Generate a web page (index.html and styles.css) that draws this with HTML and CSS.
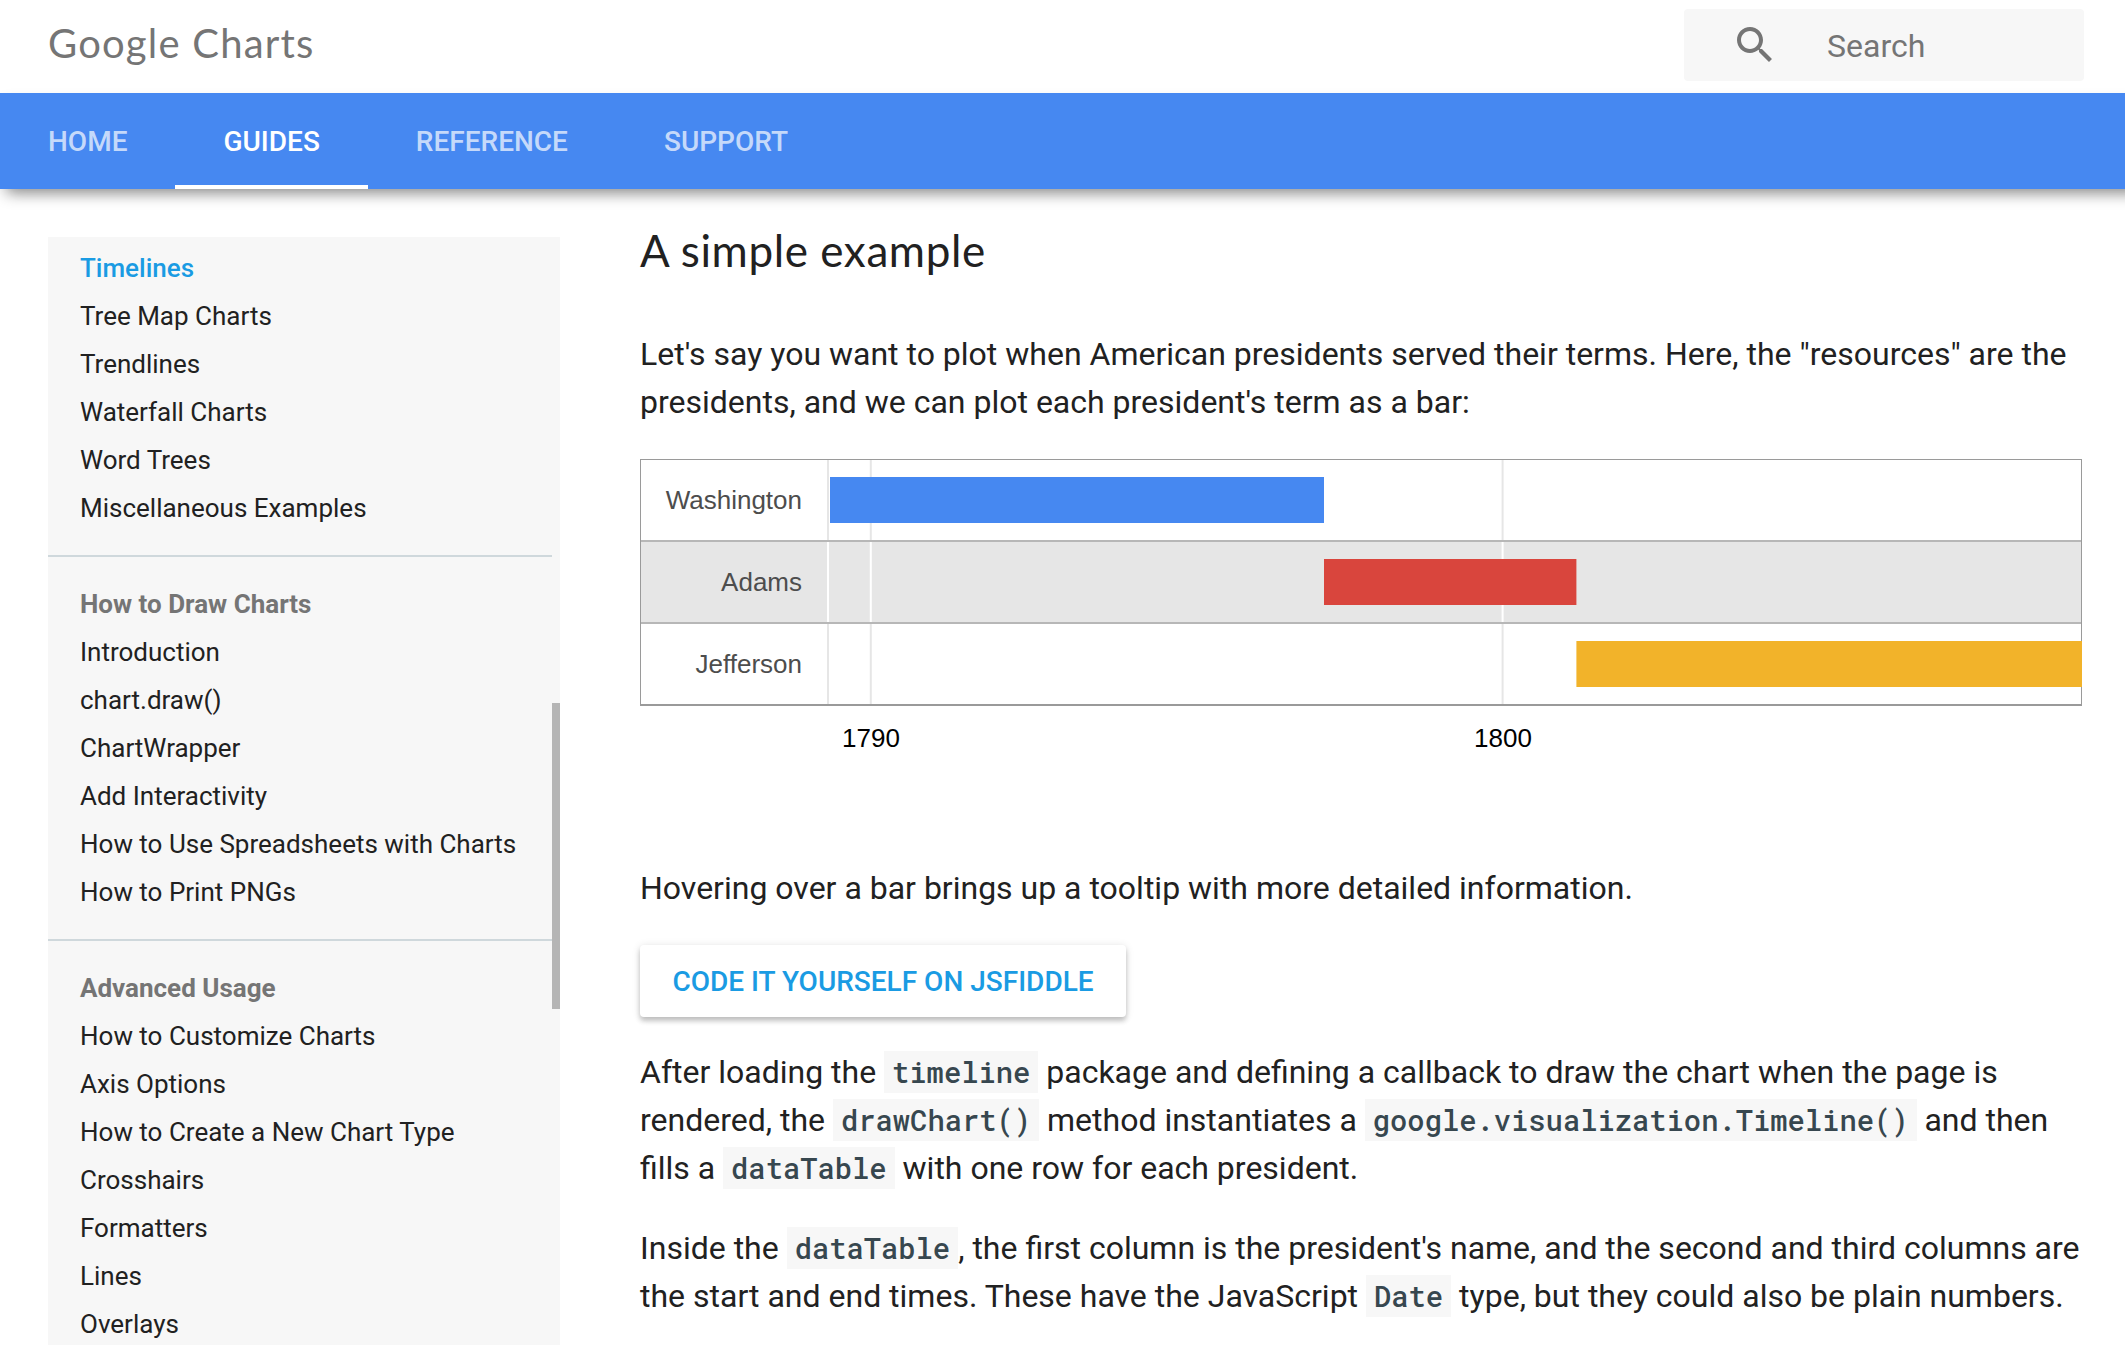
FILE: index.html
```html
<!DOCTYPE html>
<html lang="en">
<head>
<meta charset="utf-8">
<title>Timelines | Google Charts</title>
<link rel="stylesheet" href="styles.css">
</head>
<body>
<header class="topbar">
  <span class="product">Google Charts</span>
  <div class="search">
    <svg class="search-icon" viewBox="0 0 24 24" aria-hidden="true"><path d="M15.5 14h-.79l-.28-.27C15.41 12.59 16 11.11 16 9.5 16 5.91 13.09 3 9.5 3S3 5.91 3 9.5 5.91 16 9.5 16c1.61 0 3.09-.59 4.23-1.57l.27.28v.79l5 4.99L20.49 19l-4.99-5zm-6 0C7.01 14 5 11.99 5 9.5S7.01 5 9.5 5 14 7.01 14 9.5 11.99 14 9.5 14z"/></svg>
    <span class="search-label">Search</span>
  </div>
</header>
<nav class="tabs">
  <a class="tab">HOME</a>
  <a class="tab active">GUIDES</a>
  <a class="tab">REFERENCE</a>
  <a class="tab">SUPPORT</a>
</nav>
<div class="page">
  <aside class="sidebar">
    <ul class="group">
      <li class="current">Timelines</li>
      <li>Tree Map Charts</li>
      <li>Trendlines</li>
      <li>Waterfall Charts</li>
      <li>Word Trees</li>
      <li>Miscellaneous Examples</li>
    </ul>
    <ul class="group">
      <li class="heading">How to Draw Charts</li>
      <li>Introduction</li>
      <li>chart.draw()</li>
      <li>ChartWrapper</li>
      <li>Add Interactivity</li>
      <li>How to Use Spreadsheets with Charts</li>
      <li>How to Print PNGs</li>
    </ul>
    <ul class="group">
      <li class="heading">Advanced Usage</li>
      <li>How to Customize Charts</li>
      <li>Axis Options</li>
      <li>How to Create a New Chart Type</li>
      <li>Crosshairs</li>
      <li>Formatters</li>
      <li>Lines</li>
      <li>Overlays</li>
    </ul>
    <div class="scroll-thumb"></div>
  </aside>
  <main class="content">
    <h2>A simple example</h2>
    <p>Let's say you want to plot when American presidents served their terms. Here, the "resources" are the presidents, and we can plot each president's term as a bar:</p>
    <svg class="timeline" width="1442" height="374" viewBox="0 0 1442 374">
      <rect class="frame" x="0.5" y="0.5" width="1441" height="246"/>
      <rect class="band" x="1" y="83" width="1440" height="80"/>
      <g class="grid">
        <path d="M188 1V81M188 165V245M230.8 1V81M230.8 165V245M862.6 1V81M862.6 165V245"/>
        <path class="on-band" d="M188 83V163M230.8 83V163M862.6 83V163"/>
      </g>
      <path class="divider" d="M1 82H1441M1 164H1441"/>
      <path class="baseline" d="M0 246H1442"/>
      <rect fill="#4688f1" x="190" y="18" width="494" height="46"/>
      <rect fill="#d9453d" x="684" y="100" width="252.4" height="46"/>
      <rect fill="#f2b32a" x="936.4" y="182" width="505.6" height="46"/>
      <g class="row-label">
        <text x="162" y="50">Washington</text>
        <text x="162" y="132">Adams</text>
        <text x="162" y="214">Jefferson</text>
      </g>
      <g class="axis-label">
        <text x="231" y="288">1790</text>
        <text x="863" y="288">1800</text>
      </g>
    </svg>
    <p>Hovering over a bar brings up a tooltip with more detailed information.</p>
    <a class="button">CODE IT YOURSELF ON JSFIDDLE</a>
    <p>After loading the <code>timeline</code> package and defining a callback to draw the chart when the page is rendered, the <code>drawChart()</code> method instantiates a <code>google.visualization.Timeline()</code> and then fills a <code>dataTable</code> with one row for each president.</p>
    <p>Inside the <code>dataTable</code>, the first column is the president's name, and the second and third columns are the start and end times. These have the JavaScript <code>Date</code> type, but they could also be plain numbers.</p>
  </main>
</div>
</body>
</html>
```
FILE: styles.css
```css
* { box-sizing: border-box; }
html, body { height: 100%; }
body {
  margin: 0;
  display: flex;
  flex-direction: column;
  overflow: hidden;
  background: #fff;
  color: #212121;
  font: 400 32px/48px Roboto, sans-serif;
}

.topbar {
  flex: none;
  height: 93px;
  padding: 9px 41px 0 48px;
  display: flex;
  justify-content: space-between;
  align-items: flex-start;
}
.product {
  padding-top: 10px;
  font: 400 40px/48px Lato, sans-serif;
  letter-spacing: 1.2px;
  color: #757575;
}
.search {
  width: 400px;
  height: 72px;
  padding-left: 47px;
  display: flex;
  align-items: center;
  gap: 48px;
  background: #f7f7f7;
  border-radius: 4px;
  color: #757575;
}
.search-icon { width: 48px; height: 48px; fill: currentColor; }
.search-label { padding-top: 1px; }

.tabs {
  flex: none;
  position: relative;
  display: flex;
  height: 96px;
  background: #4688f1;
  box-shadow: 2px 8px 14px -4px rgba(0, 0, 0, 0.45), 12px 8px 14px -4px rgba(0, 0, 0, 0.04);
}
/* carries the bar's shadow past the window edge */
.tabs { margin-right: -16px; }
.tab {
  padding: 0 48px;
  border-bottom: 4px solid transparent;
  font-size: 28px;
  font-weight: 500;
  line-height: 98px;
  color: rgba(255, 255, 255, 0.7);
}
.tab.active { color: #fff; border-color: #fff; }

.page {
  flex: 1;
  min-height: 0;
  display: flex;
  gap: 80px;
  padding: 0 43px 0 48px;
}
.sidebar {
  position: relative;
  flex: none;
  width: 512px;
  margin-top: 48px;
  padding: 7px 8px 0 0;
  overflow: hidden;
  background: #f7f7f7;
  font-size: 26px;
}
.group {
  list-style: none;
  margin: 0;
  padding: 0 0 23px 32px;
}
.group + .group { border-top: 2px solid #cfd8dc; padding-top: 23px; }
.current { color: #1a9be3; font-weight: 500; }
.heading { color: #757575; font-weight: 700; }
.scroll-thumb {
  position: absolute;
  top: 466px;
  right: 0;
  width: 8px;
  height: 306px;
  background: #b5b5b5;
}

.content { width: 1442px; flex: none; }
h2 {
  margin: 31px 0 50px;
  font: 400 44px/60px Lato, sans-serif;
  letter-spacing: 0.6px;
}
p { margin: 0 0 32px; }
.timeline { display: block; margin: 33px 0 31px; }
.frame { fill: none; stroke: #9a9a9a; }
.band { fill: #e6e6e6; }
.grid { fill: none; stroke: #e6e6e6; stroke-width: 2; }
.grid .on-band { stroke: #fff; }
.divider { stroke: #b7b7b7; stroke-width: 2; }
.baseline { stroke: #9a9a9a; stroke-width: 2; }
.timeline text { font: 26px "Liberation Sans", Arial, sans-serif; }
.row-label { fill: #4d4d4d; text-anchor: end; }
.axis-label { fill: #000; text-anchor: middle; }

.button {
  display: block;
  width: 486px;
  height: 72px;
  margin: 33px 0 31px;
  padding-top: 1px;
  border-radius: 4px;
  background: #fff;
  box-shadow: 0 4px 5px rgba(0, 0, 0, 0.2), 0 1px 8px rgba(0, 0, 0, 0.12);
  color: #1a9be3;
  font-size: 28px;
  font-weight: 500;
  line-height: 72px;
  text-align: center;
}
code {
  padding: 2px 8px;
  background: #f7f7f7;
  color: #37474f;
  font: 500 28.8px/1 "Roboto Mono", "Liberation Mono", monospace;
}
```
